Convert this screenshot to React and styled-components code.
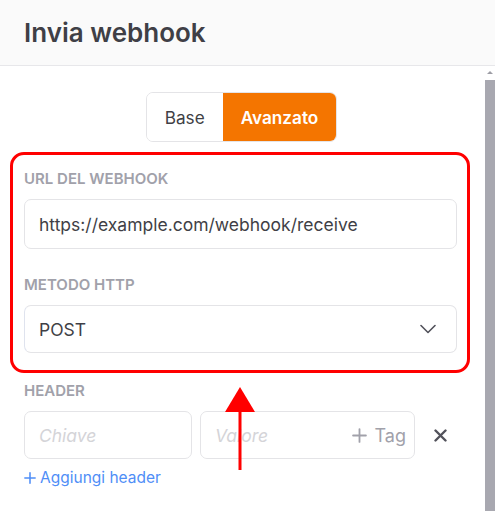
import React, { useState } from 'react';
import styled, { createGlobalStyle } from 'styled-components';

const GlobalStyle = createGlobalStyle`
  html, body {
    margin: 0;
    padding: 0;
    height: 100%;
    background: #ffffff;
  }
  body {
    font-family: Inter, "Noto Sans", "Liberation Sans", sans-serif;
    color: #3f3f46;
  }
  #root {
    height: 100%;
  }
  * {
    box-sizing: border-box;
  }
`;

const Panel = styled.div`
  height: 100vh;
  display: flex;
  flex-direction: column;
  background: #fff;
`;

const Header = styled.header`
  flex: 0 0 auto;
  height: 66px;
  display: flex;
  align-items: center;
  padding: 0 24px;
  background: #fafafa;
  border-bottom: 1px solid #e7e7ea;
`;

const Title = styled.h2`
  margin: 0;
  font-size: 26px;
  line-height: 31px;
  font-weight: 600;
  color: #3f3f46;
`;

const Body = styled.div`
  flex: 1 1 auto;
  min-height: 0;
  display: flex;
`;

const ScrollArea = styled.div`
  flex: 1 1 auto;
  min-width: 0;
  overflow: hidden;
`;

const ScrollRail = styled.div`
  flex: 0 0 10px;
  display: flex;
  flex-direction: column;
  background: #ffffff;
`;

const ScrollArrow = styled.div`
  flex: 0 0 14px;
  display: flex;
  justify-content: center;
  padding-top: 5px;

  &::before {
    content: '';
    width: 0;
    height: 0;
    border-left: 3.5px solid transparent;
    border-right: 3.5px solid transparent;
    border-bottom: 3.5px solid #9d9da5;
  }
`;

const ScrollThumb = styled.div`
  flex: 1 1 auto;
  background: #a8a8b0;
`;

const Content = styled.div`
  position: relative;
  padding: 26px 28px 0 24px;
`;

const ModeSwitch = styled.div`
  display: flex;
  justify-content: center;
  margin-bottom: 27px;
  padding-left: 2px;
`;

const ModeGroup = styled.div`
  display: inline-flex;
  border: 1px solid #e4e4e7;
  border-radius: 7px;
  overflow: hidden;
`;

const ModeButton = styled.button`
  height: 48px;
  padding: 0 18px;
  border: none;
  font-family: inherit;
  font-size: 17.2px;
  font-weight: ${(p) => (p.$active ? 600 : 400)};
  color: ${(p) => (p.$active ? '#ffffff' : '#3f3f46')};
  background: ${(p) => (p.$active ? '#f47500' : '#ffffff')};
  cursor: pointer;
`;

const Field = styled.div`
  margin-bottom: ${(p) => p.$gap || 0}px;
`;

const Label = styled.div`
  font-size: 15px;
  line-height: 20px;
  font-weight: 600;
  color: #a1a1aa;
  text-transform: uppercase;
  margin-bottom: 10px;
`;

const TextInput = styled.input`
  display: block;
  width: 100%;
  height: 50px;
  padding: 0 14px;
  border: 1px solid #e4e4e7;
  border-radius: 7px;
  font-family: inherit;
  font-size: 17.5px;
  color: #3f3f46;
  background: #fff;
  outline: none;

  &::placeholder {
    color: #d4d4d8;
    font-style: italic;
  }
`;

const SelectBox = styled.div`
  height: 48px;
  display: flex;
  align-items: center;
  justify-content: space-between;
  padding: 0 20px 0 14px;
  border: 1px solid #e4e4e7;
  border-left-color: #dfe3ee;
  border-radius: 7px;
  font-size: 17.5px;
  color: #3f3f46;
  background: #fff;
`;

const HeaderRow = styled.div`
  display: grid;
  grid-template-columns: 168px 215px 1fr;
  gap: 8px;
  align-items: center;
`;

const ValueBox = styled.div`
  height: 48px;
  display: flex;
  align-items: center;
  border: 1px solid #e4e4e7;
  border-radius: 7px;
  background: #fff;
  overflow: hidden;

  & > input {
    border: none;
    height: 46px;
    min-width: 0;
    flex: 1;
  }
`;

const KeyInput = styled(TextInput)`
  height: 48px;
`;

const TagButton = styled.button`
  flex: 0 0 auto;
  display: flex;
  align-items: center;
  gap: 8px;
  padding: 0 8px 0 0;
  border: none;
  background: none;
  font-family: inherit;
  font-size: 18px;
  color: #a1a1aa;
  cursor: pointer;
`;

const RemoveButton = styled.button`
  justify-self: center;
  display: flex;
  align-items: center;
  justify-content: center;
  width: 24px;
  height: 24px;
  padding: 0;
  border: none;
  background: none;
  cursor: pointer;
`;

const AddLink = styled.button`
  display: flex;
  align-items: center;
  gap: 4px;
  margin-top: 9px;
  padding: 0;
  border: none;
  background: none;
  font-family: inherit;
  font-size: 15.5px;
  line-height: 20px;
  color: #4f8ef7;
  cursor: pointer;
`;

const HighlightBox = styled.div`
  position: absolute;
  left: 10px;
  top: 86px;
  width: 460px;
  height: 221px;
  border: 3px solid #ff0000;
  border-radius: 14px;
  pointer-events: none;
`;

const PointerArrow = styled.svg`
  position: absolute;
  left: 224px;
  top: 320px;
  pointer-events: none;
`;

const Chevron = () => (
  <svg width="16" height="10" viewBox="0 0 16 10" fill="none">
    <polyline points="1,1.5 8,8.5 15,1.5" stroke="#52525b" strokeWidth="1.6" strokeLinecap="round" strokeLinejoin="round" />
  </svg>
);

const PlusIcon = ({ size = 14, color = 'currentColor', width = 1.8 }) => (
  <svg width={size} height={size} viewBox="0 0 14 14" fill="none">
    <path d="M7 1v12M1 7h12" stroke={color} strokeWidth={width} strokeLinecap="round" />
  </svg>
);

const CloseIcon = () => (
  <svg width="13" height="13" viewBox="0 0 13 13" fill="none">
    <path d="M1.5 1.5l10 10M11.5 1.5l-10 10" stroke="#52525b" strokeWidth="2.4" strokeLinecap="round" />
  </svg>
);

export default function App() {
  const [mode, setMode] = useState('advanced');
  const [url, setUrl] = useState('https://example.com/webhook/receive');

  return (
    <>
      <GlobalStyle />
      <Panel>
        <Header>
          <Title>Invia webhook</Title>
        </Header>
        <Body>
          <ScrollArea>
            <Content>
              <ModeSwitch>
                <ModeGroup>
                  <ModeButton $active={mode === 'base'} onClick={() => setMode('base')}>
                    Base
                  </ModeButton>
                  <ModeButton $active={mode === 'advanced'} onClick={() => setMode('advanced')}>
                    Avanzato
                  </ModeButton>
                </ModeGroup>
              </ModeSwitch>

              <Field $gap={26}>
                <Label>URL del webhook</Label>
                <TextInput value={url} onChange={(e) => setUrl(e.target.value)} />
              </Field>

              <Field $gap={28}>
                <Label>Metodo HTTP</Label>
                <SelectBox>
                  <span>POST</span>
                  <Chevron />
                </SelectBox>
              </Field>

              <Field>
                <Label>Header</Label>
                <HeaderRow>
                  <KeyInput placeholder="Chiave" />
                  <ValueBox>
                    <TextInput placeholder="Valore" />
                    <TagButton type="button">
                      <PlusIcon size={15} width={1.7} />
                      Tag
                    </TagButton>
                  </ValueBox>
                  <RemoveButton type="button" aria-label="Rimuovi">
                    <CloseIcon />
                  </RemoveButton>
                </HeaderRow>
                <AddLink type="button">
                  <PlusIcon size={12} width={1.8} />
                  Aggiungi header
                </AddLink>
              </Field>

              <HighlightBox />
              <PointerArrow width="32" height="86" viewBox="0 0 32 86">
                <polygon points="16,1 1,26 31,26" fill="#ff0000" />
                <rect x="14.5" y="24" width="3" height="60" fill="#ff0000" />
              </PointerArrow>
            </Content>
          </ScrollArea>
          <ScrollRail>
            <ScrollArrow />
            <ScrollThumb />
          </ScrollRail>
        </Body>
      </Panel>
    </>
  );
}
